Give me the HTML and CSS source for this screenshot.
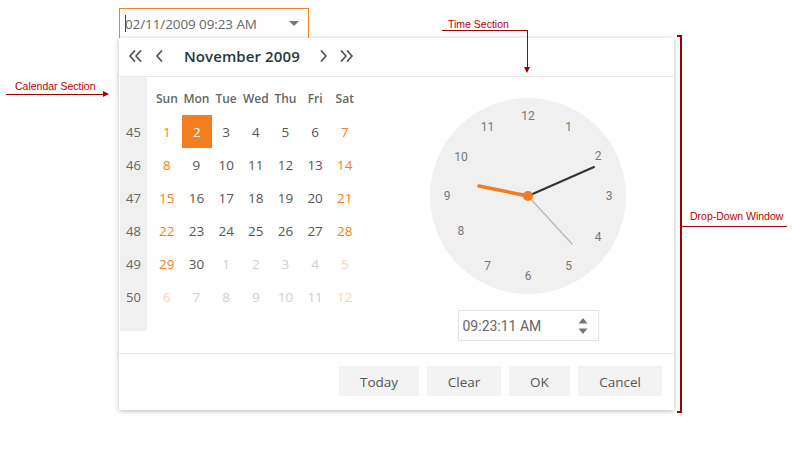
FILE: index.html
```html
<!DOCTYPE html>
<html>
<head>
<meta charset="utf-8">
<link rel="stylesheet" href="styles.css">
</head>
<body>
<div class="page">
  <div class="picker">
    <div class="input">
      <span class="caret"></span><span class="input-text">02/11/2009 09:23 AM</span>
      <span class="drop-arrow"></span>
    </div>
    <div class="panel">
      <div class="header">
        <svg class="nav nav-dbl-prev" width="14" height="12" viewBox="0 0 14 12"><polyline points="6.5,1 2,6 6.5,11" /><polyline points="12.5,1 8,6 12.5,11" /></svg>
        <svg class="nav nav-prev" width="9" height="12" viewBox="0 0 9 12"><polyline points="6.5,1 2,6 6.5,11" /></svg>
        <span class="title">November 2009</span>
        <svg class="nav nav-next" width="9" height="12" viewBox="0 0 9 12"><polyline points="2.5,1 7,6 2.5,11" /></svg>
        <svg class="nav nav-dbl-next" width="14" height="12" viewBox="0 0 14 12"><polyline points="1.5,1 6,6 1.5,11" /><polyline points="7.5,1 12,6 7.5,11" /></svg>
      </div>
      <div class="body">
        <div class="calendar">
          <div class="weeks">
            <div>45</div><div>46</div><div>47</div><div>48</div><div>49</div><div>50</div>
          </div>
          <div class="days">
            <div class="dh">Sun</div><div class="dh">Mon</div><div class="dh">Tue</div><div class="dh">Wed</div><div class="dh">Thu</div><div class="dh">Fri</div><div class="dh">Sat</div>
            <div class="we">1</div><div class="sel">2</div><div>3</div><div>4</div><div>5</div><div>6</div><div class="we">7</div>
            <div class="we">8</div><div>9</div><div>10</div><div>11</div><div>12</div><div>13</div><div class="we">14</div>
            <div class="we">15</div><div>16</div><div>17</div><div>18</div><div>19</div><div>20</div><div class="we">21</div>
            <div class="we">22</div><div>23</div><div>24</div><div>25</div><div>26</div><div>27</div><div class="we">28</div>
            <div class="we">29</div><div>30</div><div class="om">1</div><div class="om">2</div><div class="om">3</div><div class="om">4</div><div class="omwe">5</div>
            <div class="omwe">6</div><div class="om">7</div><div class="om">8</div><div class="om">9</div><div class="om">10</div><div class="om">11</div><div class="omwe">12</div>
          </div>
        </div>
        <div class="time">
          <svg class="clock" width="196" height="196" viewBox="0 0 196 196">
            <circle cx="98" cy="98" r="98" fill="#f0f0f0"/>
            <g class="nums">
              <text x="98" y="18">12</text>
              <text x="138.5" y="28.9">1</text>
              <text x="168.1" y="57.5">2</text>
              <text x="179" y="98">3</text>
              <text x="168.1" y="138.5">4</text>
              <text x="138.5" y="168.1">5</text>
              <text x="98" y="178">6</text>
              <text x="57.5" y="168.1">7</text>
              <text x="30.9" y="133">8</text>
              <text x="17" y="98">9</text>
              <text x="30.9" y="59">10</text>
              <text x="57.5" y="28.9">11</text>
            </g>
            <line x1="98" y1="98" x2="142" y2="146" stroke="#bdbdbd" stroke-width="1.6" stroke-linecap="round"/>
            <line x1="98" y1="98" x2="164" y2="69" stroke="#333" stroke-width="2" stroke-linecap="round"/>
            <line x1="98" y1="98" x2="49" y2="88" stroke="#f47b20" stroke-width="3.5" stroke-linecap="round"/>
            <circle cx="98" cy="98" r="5" fill="#f47b20"/>
          </svg>
          <div class="time-input">
            <span class="time-text">09:23:11 AM</span>
            <span class="spin">
              <svg width="10" height="18" viewBox="0 0 10 18"><polygon points="5,1 9.5,6.5 0.5,6.5" fill="#777"/><polygon points="0.5,11.5 9.5,11.5 5,17" fill="#777"/></svg>
            </span>
          </div>
        </div>
      </div>
      <div class="footer">
        <button class="btn btn-today">Today</button>
        <button class="btn btn-clear">Clear</button>
        <button class="btn btn-ok">OK</button>
        <button class="btn btn-cancel">Cancel</button>
      </div>
    </div>
  </div>

  <div class="note note-cal">
    <span class="note-text">Calendar Section</span>
  </div>
  <div class="note-cal-line"></div>
  <div class="note-cal-head"></div>

  <div class="note note-time">
    <span class="note-text">Time Section</span>
  </div>
  <div class="note-time-line"></div>
  <div class="note-time-vline"></div>
  <div class="note-time-head"></div>

  <div class="bracket"></div>
  <div class="note-dd-line"></div>
  <div class="note note-dd"><span class="note-text">Drop-Down Window</span></div>
</div>
</body>
</html>
```

FILE: styles.css
```css
* { box-sizing: border-box; }
html, body { margin: 0; padding: 0; background: #fff; }
body { font-family: "Open Sans", "Noto Sans", sans-serif; width: 792px; height: 450px; overflow: hidden; }
.page { position: relative; width: 792px; height: 450px; padding: 8px 0 0 119px; }

.picker { width: 555px; }
.input {
  width: 190px; height: 30px;
  border: 1px solid #f58220;
  border-bottom: none;
  display: flex; align-items: center;
  padding-left: 5px; padding-right: 7px;
  font-size: 13.5px; color: #666;
}
.caret { display: inline-block; width: 1px; height: 17px; background: #444; margin-right: -1px; }
.input-text { flex: 1; letter-spacing: -0.1px; }
.drop-arrow {
  width: 0; height: 0;
  border-left: 5px solid transparent; border-right: 5px solid transparent;
  border-top: 5px solid #777;
  margin-right: 2px;
}

.panel {
  width: 555px; height: 372px;
  background: #fff;
  box-shadow: 0 1px 5px rgba(0,0,0,0.28);
  display: flex; flex-direction: column;
}
.header {
  height: 39px; border-bottom: 1px solid #e8e8e8;
  display: flex; align-items: center;
  padding-left: 9px; padding-bottom: 2px;
}
.nav { fill: none; stroke: #555; stroke-width: 1.8; stroke-linecap: round; stroke-linejoin: round; }
.nav-prev { margin-left: 13px; }
.title { margin-left: 20px; font-size: 15px; font-weight: 600; color: #263838; letter-spacing: 0.1px; }
.nav-next { margin-left: 19px; }
.nav-dbl-next { margin-left: 12px; }

.body { height: 277px; display: flex; border-bottom: 1px solid #e8e8e8; }
.calendar { display: flex; width: 263px; padding-left: 1px; }
.weeks {
  width: 27px; height: 254px; background: #f0f0f0;
  padding-top: 38px;
  font-size: 13px; color: #666;
}
.weeks div { height: 33px; display: flex; align-items: center; justify-content: center; }
.days {
  margin-left: 5px; padding-top: 5px;
  display: grid; grid-template-columns: repeat(7, 29.67px); grid-auto-rows: 33px;
  font-size: 13.5px; color: #555; align-content: start;
}
.days div { display: flex; align-items: center; justify-content: center; }
.days .dh { font-size: 12px; font-weight: 600; color: #666; }
.days .we { color: #f57f20; }
.days .om { color: #cfcfcf; }
.days .omwe { color: #fbd3b4; }
.days .sel { background: #f57f20; color: #fff; margin: 0 -1px 0 0; }

.time { flex: 1; display: flex; flex-direction: column; align-items: center; padding-top: 21px; }
.clock { display: block; }
.nums text { font-family: Roboto, sans-serif; font-size: 12px; fill: #777; text-anchor: middle; dominant-baseline: central; }
.time-input {
  margin-top: 16px; width: 141px; height: 31px;
  border: 1px solid #e3e3e3;
  display: flex; align-items: center; justify-content: space-between;
  padding: 0 10px 0 4px;
}
.time-text { font-family: Roboto, sans-serif; font-size: 14px; color: #666; }
.spin { display: flex; }

.footer { flex: 1; display: flex; justify-content: flex-end; align-items: flex-start; padding-top: 12px; padding-right: 12px; gap: 8px; }
.btn {
  height: 30px; border: none; background: #f3f3f3;
  font-family: "Open Sans", "Noto Sans", sans-serif; font-size: 13.5px; color: #555;
  padding: 1px 0 0 0; cursor: default;
}
.btn-today { width: 80px; }
.btn-clear { width: 74px; }
.btn-ok { width: 61px; }
.btn-cancel { width: 84px; }

/* annotations */
.note { position: absolute; font-family: "Liberation Sans", Arial, sans-serif; font-size: 10.5px; color: #c00000; white-space: nowrap; }
.note-cal { left: 15px; top: 80px; }
.note-cal-line { position: absolute; left: 6px; top: 94px; width: 98px; height: 1px; background: #a00000; }
.note-cal-head { position: absolute; left: 103px; top: 91px; width: 0; height: 0; border-top: 3.5px solid transparent; border-bottom: 3.5px solid transparent; border-left: 6px solid #a00000; }

.note-time { left: 448px; top: 18px; }
.note-time-line { position: absolute; left: 442px; top: 30px; width: 86px; height: 1px; background: #a00000; }
.note-time-vline { position: absolute; left: 527px; top: 30px; width: 1px; height: 38px; background: #a00000; }
.note-time-head { position: absolute; left: 524px; top: 67px; width: 0; height: 0; border-left: 3.5px solid transparent; border-right: 3.5px solid transparent; border-top: 6px solid #a00000; }

.bracket { position: absolute; left: 677px; top: 35px; width: 5px; height: 378px; border: 2px solid #a00000; border-left: none; }
.note-dd-line { position: absolute; left: 681px; top: 226px; width: 106px; height: 1px; background: #a00000; }
.note-dd { left: 690px; top: 210px; }
```
